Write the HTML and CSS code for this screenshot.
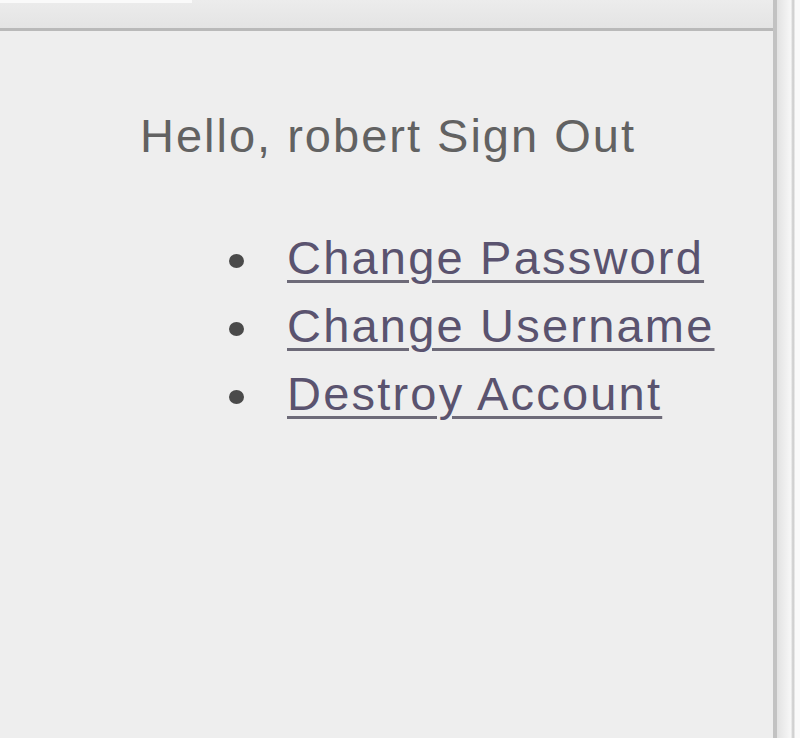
FILE: index.html
```html
<!DOCTYPE html>
<html lang="en">
<head>
    <meta charset="UTF-8">
    <title>Account</title>
    <link rel="stylesheet" href="styles.css">
</head>
<body>
    <div class="window">
        <div class="viewport">
            <div class="toolbar">
                <span class="tab"></span>
            </div>
            <main class="account">
                <p class="greeting">Hello, robert <a href="#" class="plain-link">Sign Out</a></p>
                <ul class="account-links">
                    <li><a href="#">Change Password</a></li>
                    <li><a href="#">Change Username</a></li>
                    <li><a href="#">Destroy Account</a></li>
                </ul>
            </main>
        </div>
        <div class="scrollbar"></div>
    </div>
</body>
</html>
```

FILE: styles.css
```css
* {
    margin: 0;
    padding: 0;
    box-sizing: border-box;
}

body {
    background: #eeeeee;
    font-family: 'Liberation Sans', Arial, sans-serif;
    height: 738px;
    overflow: hidden;
}

.window {
    display: flex;
    height: 100%;
}

.viewport {
    flex: 1;
    display: flex;
    flex-direction: column;
}

/* Toolbar strip */
.toolbar {
    height: 31px;
    background: linear-gradient(#ececec, #e4e4e4);
    border-bottom: 3px solid #b9b9b9;
}

.tab {
    display: block;
    width: 192px;
    height: 3px;
    background: #fafafa;
}

/* Main content */
.account {
    flex: 1;
    padding: 77px 0 0 140px;
    color: #626262;
}

.greeting {
    font-size: 47px;
    line-height: 56px;
    letter-spacing: 2px;
}

.plain-link {
    color: #626262;
    text-decoration: none;
}

.account-links {
    list-style: none;
    margin-top: 60px;
    padding-left: 89px;
    font-size: 47px;
    line-height: 68px;
    letter-spacing: 2.2px;
}

.account-links li {
    display: flex;
    align-items: center;
}

.account-links li::before {
    content: "";
    width: 15px;
    height: 14px;
    border-radius: 50%;
    background: #4a4a4a;
    margin: 5px 43px 0 0;
}

.account-links a {
    color: #5a536f;
    text-decoration: underline;
    text-decoration-thickness: 3px;
    text-underline-offset: 6px;
    text-decoration-color: #6d6a78;
}

/* Right scrollbar */
.scrollbar {
    width: 27px;
    border-left: 4px solid #c2c2c2;
    background: linear-gradient(90deg, #e2e2e2, #f7f7f7 60%, #c8c8c8 70%, #fafafa 80%);
}
```
